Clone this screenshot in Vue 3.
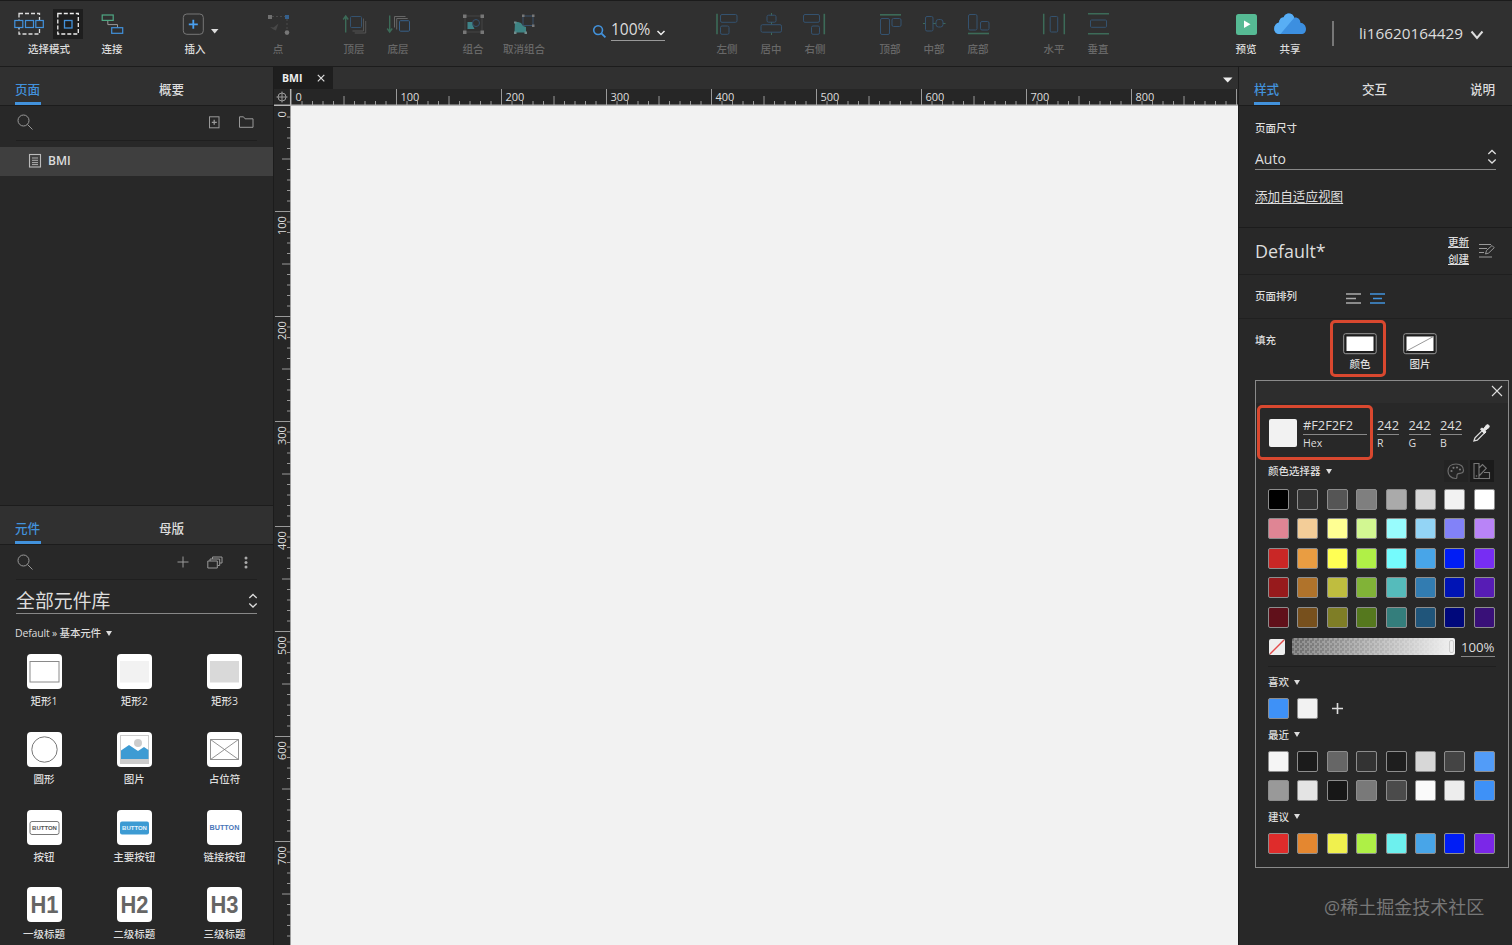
<script setup>
const G = '#3c6b58'
const B = '#34526f'
const Y = '#707070'
const icons = {
  connect: `<path d="M10.8 8.7V12.6H20.5V15.3" stroke="#999"/><rect x="5.2" y="3" width="11" height="5.4" stroke="#4fa884" stroke-width="1.200"/><rect x="14.7" y="15.7" width="11" height="5.6" stroke="#4292dc" stroke-width="1.200"/>`,
  insert: `<rect x="3.3" y="2" width="20" height="20.3" rx="3.5" stroke="#777"/><path d="M13.3 7.8v9M8.800 12.3h9" stroke="#4aa0f0" stroke-width="1.8"/>`,
  point: `<path d="M9 4.5h13M24 7v12" stroke="#4a4a4a" stroke-dasharray="2 2"/><path d="M5 3h4v4h-4z" fill="${Y}" stroke="none"/><path d="M22 3h4v4h-4z" fill="#35608c" stroke="none"/><circle cx="24" cy="20.6" r="2.3" fill="#777" stroke="none"/><path d="M7 15l3.500.5 5-4-2.500 7-2.500-1z" fill="#484848" stroke="none"/>`,
  front: `<path d="M6.7 20.5V4.5M4.200 7.500l2.500-3.500 2.500 3.500" stroke="${G}" stroke-width="1.4"/><path d="M24.500 6.500v12.500h-11M26.700 9v12h-11" stroke="#555"/><rect x="11.500" y="4.500" width="11" height="11" rx="1" stroke="${B}"/>`,
  back: `<path d="M6.700 3.500v16M4.200 16.500l2.500 3.500 2.500-3.500" stroke="${G}" stroke-width="1.4"/><path d="M11.500 15.500V4.500h11M13.700 17.500V6.500h11" stroke="#666"/><rect x="16.500" y="8.700" width="10" height="10.500" rx="1" stroke="#386089"/>`,
  group: `<rect x="7" y="4" width="17" height="16" stroke="#444"/><path d="M5 2.500h3.500v3.500h-3.500zM22.500 2.500h3.500v3.500h-3.500zM5 18.500h3.500v3.500h-3.500zM22.500 18.500h3.500v3.500h-3.500z" fill="#777" stroke="none"/><path d="M9.500 10h5v3l2 4h-7z" fill="#3e8489" stroke="none"/><circle cx="18" cy="11" r="3.500" stroke="${B}"/>`,
  ungroup: `<rect x="14" y="4" width="10" height="9.500" stroke="#38506a"/><path d="M13 2.500h2.500v2.500h-2.500zM23 2.500h2.500v2.500h-2.500zM23 12.500h2.500v2.500h-2.500z" fill="#777" stroke="none"/><path d="M6 10h3l3 1 2 3 3 1v5.500H5.500z" fill="#3e8484" stroke="none"/><path d="M5 9.500h2.500v2h-2.500zM5 19.500h2.500v2.500h-2.500zM15.500 19.500h2.500v2.500h-2.500z" fill="#6f8a8a" stroke="none"/>`,
  left: `<path d="M5 1.800v20.500" stroke="${G}" stroke-width="1.600"/><rect x="8.500" y="2.500" width="16.500" height="7.800" rx="1.500"/><rect x="8.500" y="14" width="8.500" height="8.300" rx="1.500"/>`,
  center: `<path d="M15.500 1v2.500M15.500 10v2.500M15.500 20.500v2.500" stroke="${G}"/><rect x="11" y="3.200" width="9" height="7" rx="1.500"/><rect x="5" y="12.700" width="20.500" height="7.500" rx="1.500"/>`,
  right: `<path d="M24.300 1.800v20.500" stroke="${G}" stroke-width="1.600"/><rect x="3.500" y="2.500" width="16" height="7.800" rx="1.500"/><rect x="11.500" y="14" width="8" height="8.300" rx="1.500"/>`,
  top: `<path d="M5 2.800h21" stroke="${G}" stroke-width="1.600"/><rect x="5.500" y="6.500" width="9" height="16" rx="1.500"/><rect x="17" y="6.500" width="9" height="8" rx="1.500"/>`,
  middle: `<path d="M4 11.500h2.500M14 11.500h3M24 11.500h2.500" stroke="${G}"/><rect x="6.500" y="4.500" width="7.500" height="14.500" rx="1.500"/><rect x="17" y="7.500" width="7" height="7.500" rx="2.500"/>`,
  bottom: `<path d="M5 21.500h21" stroke="${G}" stroke-width="1.600"/><rect x="5.500" y="2.500" width="8.500" height="15.500" rx="1.500"/><rect x="17.500" y="9.500" width="8.500" height="8.500" rx="1.500"/>`,
  horizontal: `<path d="M4.700 1.800v20.500M25.300 1.800v20.500" stroke="${G}" stroke-width="1.500"/><rect x="11.200" y="4.500" width="7.500" height="15.500" rx="1"/>`,
  vertical: `<path d="M5 1.700h21M5 21.800h21" stroke="${G}" stroke-width="1.500"/><rect x="7.500" y="8" width="16" height="7.300" rx="1"/>`,
  preview: `<rect x="5" y="2" width="21" height="21" rx="2.500" fill="#56ba94" stroke="none"/><path d="M13 8.500v7.500l6.500-3.750z" fill="#fff" stroke="none"/>`,
  share: `<path d="M3.800 22A5.500 5.500 0 0 1-.8 17C-.8 13.500 1.200 11.300 4 10.500C4.300 7.300 6.500 5.300 8.500 5.600C9.600 2.700 11.500 1.500 13.700 1.500C16.500 1.500 18.500 3 19.200 5.700C22.500 5 25.500 7.500 25.400 10.700C28.500 11 31 13.500 31 17C31 19.800 29.500 22 27.300 22Z" fill="#3c8fe0" stroke="none"/><path d="M3.800 22A5.500 5.500 0 0 1-.8 17C-.8 13.500 1.200 11.300 4 10.500C4.300 7.300 6.500 5.300 8.500 5.600C9.600 2.700 11.500 1.500 13.700 1.500C16.500 1.500 18.500 3 19.200 5.700L5.500 22Z" fill="#58aef5" stroke="none"/>`,
}
const tools = [
  { id: 'connect', label: '连接', cls: 'on' },
  { id: 'insert', label: '插入', cls: 'on g-insert' },
  { id: 'point', label: '点', cls: 'g-point' },
  { id: 'front', label: '顶层', cls: 'g-order' },
  { id: 'back', label: '底层' },
  { id: 'group', label: '组合', cls: 'g-group' },
  { id: 'ungroup', label: '取消组合', cls: 'g-ungroup' },
]
const aligns = [
  { id: 'left', label: '左侧' },
  { id: 'center', label: '居中' },
  { id: 'right', label: '右侧' },
  { id: 'top', label: '顶部', cls: 'g-align' },
  { id: 'middle', label: '中部' },
  { id: 'bottom', label: '底部' },
  { id: 'horizontal', label: '水平', cls: 'g-spread' },
  { id: 'vertical', label: '垂直' },
  { id: 'preview', label: '预览', cls: 'on g-preview' },
  { id: 'share', label: '共享', cls: 'on' },
]
const btn = (fill, stroke, color, size) =>
  `${fill || stroke ? `<rect x="3" y="11.500" width="29" height="13" rx="2" fill="${fill || 'none'}" stroke="${stroke || 'none'}"/>` : ''}<text x="17.500" y="20" text-anchor="middle" font-size="${size}" font-weight="700" fill="${color}">BUTTON</text>`
const head = (t) => `<text x="17.500" y="26" text-anchor="middle" font-size="23.500" font-weight="700" fill="#666" textLength="28" lengthAdjust="spacingAndGlyphs">${t}</text>`
const widgets = [
  { label: '矩形1', art: '<rect x="3" y="7.500" width="29" height="20.500" fill="#fff" stroke="#8a8a8a"/>' },
  { label: '矩形2', art: '<rect x="3" y="7" width="29" height="21.500" fill="#f2f2f2"/>' },
  { label: '矩形3', art: '<rect x="3" y="7" width="29" height="21.500" fill="#d9d9d9"/>' },
  { label: '圆形', art: '<circle cx="17.500" cy="17.500" r="12.700" fill="none" stroke="#777"/>' },
  { label: '图片', art: '<rect x="3.500" y="3.500" width="28" height="28" fill="#fff" stroke="#ccc"/><rect x="3" y="27" width="29" height="5" fill="#ccc"/><circle cx="21" cy="11" r="4" fill="#ccc"/><path d="M4 18.500L12 13l9 6 6-4 4.500 3v9H4z" fill="#3d9bd3"/>' },
  { label: '占位符', art: '<path d="M3.500 7.500h28v20h-28zM3.500 7.500l28 20M31.500 7.500l-28 20" fill="none" stroke="#777" stroke-width=".8"/>' },
  { label: '按钮', art: btn('#fff', '#777', '#555', 6) },
  { label: '主要按钮', art: btn('#3d9bd3', '', '#e4f3fc', 6) },
  { label: '链接按钮', art: btn('', '', '#4a76b8', 7.2) },
  { label: '一级标题', art: head('H1') },
  { label: '二级标题', art: head('H2') },
  { label: '三级标题', art: head('H3') },
]
const palette = [
  '#000000', '#333333', '#555555', '#7f7f7f', '#aaaaaa', '#d7d7d7', '#f2f2f2', '#ffffff',
  '#df8594', '#f3cd98', '#ffff93', '#d2f792', '#98fcfd', '#93d4f5', '#8282f8', '#b984f7',
  '#c92726', '#e99d42', '#ffff54', '#b0f047', '#75fbfd', '#48a5e8', '#001df5', '#772df3',
  '#971a1c', '#b0732b', '#bfbd3f', '#81b337', '#55bbbb', '#327cb1', '#0014b5', '#571cb5',
  '#60101a', '#77501d', '#7f7e26', '#55781e', '#347e7c', '#20557a', '#00087b', '#391078',
]
const favourites = ['#3e91f7', '#f2f2f2']
const recent = [
  '#f5f5f5', '#1b1b1b', '#666666', '#333333', '#1e1e1e', '#d7d7d7', '#444444', '#529cf8',
  '#999999', '#e4e4e4', '#171717', '#797979', '#4b4b4b', '#fafafa', '#ededed', '#3e91f7',
]
const suggested = ['#df2c2b', '#e48730', '#f0f04e', '#aef046', '#6df0ee', '#48a5e8', '#001df5', '#7b27e8']

const step = 10.5
const hTicks = Array.from({ length: 91 }, (_, i) => ({ p: 17.5 + i * step, i })).filter((t) => t.i > 0)
const vTicks = Array.from({ length: 80 }, (_, i) => ({ p: 0.5 + i * step, i })).filter((t) => t.i > 0)
const hLabels = Array.from({ length: 9 }, (_, i) => i)
const vLabels = Array.from({ length: 8 }, (_, i) => i)
const depth = (i) => (i % 10 === 0 ? 16 : i % 5 === 0 ? 9 : 4)
</script>

<template>
  <div class="app">
    <header class="toolbar">
      <div class="modes">
        <div class="mode-icons">
          <svg class="mode" viewBox="0 0 30 30"><rect x="5" y="4.500" width="20.500" height="20.500" fill="none" stroke="#ddd" stroke-width="1.300" stroke-dasharray="4 2" /><g fill="#303030" stroke="#4292dc" stroke-width="1.200"><rect x=".8" y="11.500" width="8" height="7" /><rect x="11.500" y="11.500" width="8" height="7" /><rect x="21.800" y="11.500" width="7.500" height="7" /></g></svg>
          <svg class="mode active" viewBox="0 0 30 30"><rect x="4.800" y="4.500" width="20.500" height="20.500" fill="none" stroke="#eee" stroke-width="1.300" stroke-dasharray="4 2" /><rect x="11.500" y="11.500" width="7.500" height="7.500" fill="none" stroke="#4292dc" stroke-width="1.300" /></svg>
        </div>
        <span class="tool-label">选择模式</span>
      </div>
      <div v-for="t in tools" :key="t.id" class="tool" :class="t.cls">
        <svg class="tool-icon" viewBox="0 0 30 24" v-html="icons[t.id]" />
        <span class="tool-label">{{ t.label }}</span>
        <svg v-if="t.id === 'insert'" class="caret" viewBox="0 0 8 5"><path d="M0 0h7.500L3.700 4.500z" fill="#ddd" /></svg>
      </div>
      <div class="zoom">
        <svg class="zoom-icon" viewBox="0 0 16 16"><circle cx="6.500" cy="6.500" r="4.700" fill="none" stroke="#4292dc" stroke-width="1.700" /><path d="M10 10l4.300 4.300" stroke="#4292dc" stroke-width="2" /></svg>
        <div class="zoom-value"><span>100%</span><svg class="zoom-arrow" viewBox="0 0 10 6"><path d="M1.500 1l3.500 3.500L8.500 1" fill="none" stroke="#eee" stroke-width="1.500" /></svg></div>
      </div>
      <div v-for="t in aligns" :key="t.id" class="tool" :class="t.cls">
        <svg class="tool-icon" viewBox="0 0 30 24" v-html="icons[t.id]" />
        <span class="tool-label">{{ t.label }}</span>
      </div>
      <div class="rule"></div>
      <div class="user"><span>li16620164429</span><svg viewBox="0 0 14 10"><path d="M1.500 1.500L7 8l5.500-6.500" fill="none" stroke="#ddd" stroke-width="2" /></svg></div>
    </header>

    <div class="body">
      <aside class="left">
        <section class="pages">
          <nav class="tabs"><span class="tab current">页面</span><span class="tab">概要</span></nav>
          <div class="search">
            <svg class="lens" viewBox="0 0 16 16"><circle cx="6.500" cy="6.500" r="5.500" /><path d="M10.500 10.500l5 5" /></svg>
            <svg class="add-page" viewBox="0 0 11 13"><rect x=".5" y=".8" width="9.500" height="11" /><path d="M5.200 3.800v5M2.800 6.300h5" stroke-width="1.300" /></svg>
            <svg class="folder" viewBox="0 0 15 12"><path d="M.5.800h4l1.500 2h8v8.500H.5z" /></svg>
          </div>
          <div class="page-row">
            <svg viewBox="0 0 12 14"><rect x=".5" y=".5" width="11" height="12.500" fill="none" stroke="#bbb" stroke-width="1.100" /><path d="M3 4h6M3 6.300h6M3 8.600h6M3 10.600h6" stroke="#bbb" stroke-width=".9" /></svg>
            <span>BMI</span>
          </div>
        </section>
        <section class="library">
          <nav class="tabs"><span class="tab current">元件</span><span class="tab">母版</span></nav>
          <div class="search">
            <svg class="lens" viewBox="0 0 16 16"><circle cx="6.500" cy="6.500" r="5.500" /><path d="M10.500 10.500l5 5" /></svg>
            <svg class="plus" viewBox="0 0 12 12"><path d="M6 .5v11M.5 6h11" /></svg>
            <svg class="stack" viewBox="0 0 16 13"><path d="M.8 5h9.500v7H.8zM3 5V3h9.700v6.500h-2M5.500 3V1h9.500v6h-2" /></svg>
            <svg class="dots" viewBox="0 0 4 13"><g fill="#aaa" stroke="none"><circle cx="2" cy="2" r="1.500" /><circle cx="2" cy="6.500" r="1.500" /><circle cx="2" cy="11" r="1.500" /></g></svg>
          </div>
          <div class="lib-select"><span>全部元件库</span><svg class="updown" viewBox="0 0 10 16"><path d="M1.300 5L5 1.500 8.700 5M1.300 10.500L5 14l3.700-3.500" /></svg></div>
          <div class="category"><span>Default » 基本元件</span><i class="tri"></i></div>
          <div class="widgets">
            <div v-for="w in widgets" :key="w.label" class="widget">
              <svg class="tile" viewBox="0 0 35 35" v-html="w.art" />
              <span>{{ w.label }}</span>
            </div>
          </div>
        </section>
      </aside>

      <main class="stage">
        <div class="doc-tabs">
          <div class="doc-tab"><span>BMI</span><svg viewBox="0 0 8 8"><path d="M.8.800l6.500 6.500M7.300.800L.8 7.300" stroke="#ddd" stroke-width="1.200" /></svg></div>
          <svg class="doc-menu" viewBox="0 0 10 6"><path d="M0 .5h9.500L4.700 5.500z" fill="#eee" /></svg>
        </div>
        <svg class="hruler" viewBox="0 0 964 17">
          <g fill="none" stroke="#999"><circle cx="8" cy="8" r="4" /><path d="M8 2.500v11M2.500 8h11" /></g>
          <path v-for="t in hTicks" :key="t.i" :d="`M${t.p} 16v-${depth(t.i)}`" stroke="#999" />
          <text v-for="n in hLabels" :key="n" :x="21.500 + n * 105" y="12">{{ n * 100 }}</text>
          <path d="M0 16.300h964" stroke="#b5b5b5" stroke-width="1.400" />
          <path d="M16.700 0v17" stroke="#b5b5b5" stroke-width="1.500" />
        </svg>
        <div class="canvas-row">
          <svg class="vruler" viewBox="0 0 17 839">
            <path v-for="t in vTicks" :key="t.i" :d="`M17 ${t.p}h-${depth(t.i)}`" stroke="#999" />
            <text v-for="n in vLabels" :key="n" :transform="`translate(12.200 ${5.2 + n * 105}) rotate(-90)`" text-anchor="end">{{ n * 100 }}</text>
            <path d="M16.600 0v839" stroke="#aaa" />
          </svg>
          <div class="canvas"></div>
        </div>
      </main>

      <aside class="right">
        <nav class="tabs"><span class="tab current">样式</span><span class="tab">交互</span><span class="tab">说明</span></nav>
        <section class="size">
          <label>页面尺寸</label>
          <div class="auto"><span>Auto</span><svg class="updown" viewBox="0 0 10 16"><path d="M1.300 5L5 1.500 8.700 5M1.300 10.500L5 14l3.700-3.500" /></svg></div>
          <u class="adaptive">添加自适应视图</u>
        </section>
        <section class="style-name">
          <span class="name">Default*</span>
          <div class="links"><u>更新</u><u>创建</u></div>
          <svg viewBox="0 0 17 16"><path d="M1 1.500h12M1 5.500h8M1 9.500h5M1 14h13" /><path d="M7.500 11l1-3.500 5.500-5 2.200 2.200-5.500 5.300z" fill="#282828" /></svg>
        </section>
        <section class="arrange">
          <label>页面排列</label>
          <svg viewBox="0 0 15 11"><path d="M0 1h15M0 5.500h10M0 10h15" stroke="#aaa" stroke-width="1.700" /></svg>
          <svg viewBox="0 0 15 11"><path d="M0 1h15M3 5.500h9M0 10h15" stroke="#4292dc" stroke-width="1.700" /></svg>
        </section>
        <section class="fill">
          <label>填充</label>
          <div class="fill-item"><svg viewBox="0 0 34 22"><rect x=".7" y=".7" width="32.500" height="20" rx="2" fill="#1e1e1e" stroke="#999" /><rect x="3.500" y="3.500" width="27" height="14.500" fill="#fff" /></svg><span>颜色</span></div>
          <div class="fill-item"><svg viewBox="0 0 34 22"><rect x=".7" y=".7" width="32.500" height="20" rx="2" fill="#1e1e1e" stroke="#999" /><rect x="3.500" y="3.500" width="27" height="14.500" fill="#fff" /><path d="M3.500 18l27-14.500" stroke="#999" /></svg><span>图片</span></div>
        </section>

        <div class="picker">
          <div class="picker-head"><svg viewBox="0 0 12 12"><path d="M1 1l10 10M11 1L1 11" stroke="#ddd" stroke-width="1.100" /></svg></div>
          <div class="values">
            <div class="preview"></div>
            <div class="field hex"><b>#F2F2F2</b><small>Hex</small></div>
            <div v-for="c in ['R', 'G', 'B']" :key="c" class="field"><b>242</b><small>{{ c }}</small></div>
            <svg viewBox="0 0 18 20"><path d="M2 17.800l1-3 7-7 2.300 2.300-7 7z" fill="none" stroke="#ddd" stroke-width="1.300" /><path d="M8.500 6l1.500-1 1.500 1 3-4c1.500-1 3.500.5 2.500 2.500L13 7.500l1 1.500-1.500 1.500z" fill="#e8e8e8" stroke="#e8e8e8" /></svg>
          </div>
          <div class="mode-row">
            <span>颜色选择器</span><i class="tri"></i>
            <svg viewBox="0 0 24 22"><path d="M12 4c-5 0-8 3-8 7s3 7.500 7.500 7.500c2.500 0 .5-3 2-4.500s6 .5 6-3.500S17 4 12 4z" fill="none" stroke="#6c6c6c" stroke-width="1.200" /><g fill="#777"><circle cx="7.500" cy="11" r="1.100" /><circle cx="9.500" cy="7.800" r="1.100" /><circle cx="13" cy="7.500" r="1.100" /><circle cx="16" cy="9.500" r="1.100" /></g></svg>
            <svg class="picked" viewBox="0 0 24 22"><path d="M4 3.500h5v15H4zM9 8l3.500-3.500 3.800 3.800L9 16M14 12.500h5.500v6H6" fill="none" stroke="#777" stroke-width="1.100" /><circle cx="6.500" cy="16" r=".8" fill="#777" /></svg>
          </div>
          <div class="swatches main"><i v-for="(c, i) in palette" :key="i" :style="{ background: c }"></i></div>
          <div class="alpha">
            <svg viewBox="0 0 16 16"><rect width="16" height="16" rx="2" fill="#eee" /><path d="M1 15L15 1" stroke="#e34a4a" stroke-width="1.400" /></svg>
            <div class="track"><i></i></div>
            <span>100%</span>
          </div>
          <div class="group fav"><span>喜欢</span><i class="tri"></i></div>
          <div class="swatches"><i v-for="(c, i) in favourites" :key="i" :style="{ background: c }"></i><svg viewBox="0 0 21 21"><path d="M10.500 5v11M5 10.500h11" stroke="#ddd" stroke-width="1.600" /></svg></div>
          <div class="group"><span>最近</span><i class="tri"></i></div>
          <div class="swatches"><i v-for="(c, i) in recent" :key="i" :style="{ background: c }"></i></div>
          <div class="group"><span>建议</span><i class="tri"></i></div>
          <div class="swatches"><i v-for="(c, i) in suggested" :key="i" :style="{ background: c }"></i></div>
        </div>
        <div class="mark mark-color"></div>
        <div class="mark mark-hex"></div>
        <div class="watermark">@稀土掘金技术社区</div>
      </aside>
    </div>
  </div>
</template>

<style>
body { background: #282828; overflow: hidden; }
</style>

<style scoped>
* { box-sizing: border-box; }
.app { width: 1512px; height: 945px; display: flex; flex-direction: column; overflow: hidden; background: #282828; color: #ddd; font-family: "Open Sans", "Noto Sans CJK SC", sans-serif; font-size: 10.5px; line-height: 14px; white-space: nowrap; }
svg { display: block; flex: none; overflow: visible; }
label, .tool-label, .category, .widget span, .fill-item span, .group, .mode-row, .links { font-weight: 500; }

.toolbar { height: 67px; flex: none; display: flex; background: #303030; border-top: 1px solid #1b1b1b; border-bottom: 1px solid #1c1c1c; padding-left: 14px; }
.modes { width: 71px; padding-top: 8px; display: flex; flex-direction: column; }
.mode-icons { display: flex; gap: 9px; }
.mode { width: 30px; height: 30px; }
.mode.active { background: #1e1e1e; }
.modes .tool-label { margin: 3px 0 0 14px; }
.tool { width: 44px; padding-top: 11px; display: flex; flex-direction: column; align-items: center; color: #686868; position: relative; }
.modes + .tool { margin-left: 5px; }
.tool.on { color: #ddd; }
.tool-icon { width: 30px; height: 24px; fill: none; stroke: #34526f; }
.tool-label { margin-top: 6px; }
.g-insert { margin-left: 39px; }
.g-point { margin-left: 39px; }
.g-order { margin-left: 32px; }
.g-group { margin-left: 31px; }
.g-ungroup { margin-left: 7px; }
.g-align { margin-left: 31px; }
.g-spread { margin-left: 32px; }
.g-preview { margin-left: 104px; }
.caret { position: absolute; width: 8px; height: 5px; left: 38px; top: 28px; }
.zoom { display: flex; width: 114px; margin-left: 46px; margin-right: -1px; padding-top: 19px; }
.zoom-icon { width: 15px; height: 15px; margin: 4px 4px 0 0; }
.zoom-value { width: 54px; height: 21px; border-bottom: 1px solid #999; display: flex; justify-content: space-between; font-size: 15.500px; line-height: 19px; }
.zoom-arrow { width: 10px; height: 6px; margin: 10px -1px 0 0; }
.rule { width: 2px; height: 25px; background: #777; margin: 20px 0 0 20px; }
.user { display: flex; margin-left: 25px; padding-top: 21px; font-size: 15.300px; line-height: 22px; }
.user svg { width: 14px; height: 10px; margin: 8px 0 0 7px; }

.body { flex: 1; display: flex; min-height: 0; }
.tabs { height: 39px; background: #303030; border-bottom: 1px solid #1c1c1c; display: flex; font-size: 12.6px; font-weight: 500; }
.tab { line-height: 46px; height: 38px; width: 26px; }
.tab.current { color: #4292dc; border-bottom: 3px solid #4292dc; }

.left { width: 274px; border-right: 1px solid #1c1c1c; display: flex; flex-direction: column; }
.left .tabs { padding-left: 15px; gap: 118px; }
.pages { height: 438px; flex: none; }
.search { height: 35px; margin: 0 16px; border-bottom: 1px solid #1f1f1f; display: flex; align-items: center; }
.search svg { fill: none; stroke: #999; }
.pages .search { padding-bottom: 2px; }
.lens { width: 16px; height: 16px; margin: 0 auto 1px 1px; }
.add-page { width: 11px; height: 13px; margin-right: 19px; }
.folder { width: 15px; height: 12px; margin-right: 3px; }
.plus { width: 12px; height: 12px; margin-right: 18px; }
.stack { width: 16px; height: 13px; margin-right: 21px; }
.dots { width: 4px; height: 13px; margin-right: 9px; }
.page-row { height: 29px; margin-top: 6px; background: #3f3f3f; display: flex; align-items: center; padding: 0 0 2px 29px; font-size: 12px; font-weight: 600; }
.page-row svg { width: 12px; height: 14px; margin: 1px 7px 0 0; }
.library { flex: 1; min-height: 0; border-top: 1px solid #1c1c1c; }
.lib-select { height: 34px; margin: 0 16px; border-bottom: 1px solid #888; display: flex; align-items: center; justify-content: space-between; font-size: 18.9px; padding-top: 8px; line-height: 24px; }
.updown { width: 10px; height: 16px; fill: none; stroke: #ddd; stroke-width: 1.300; }
.lib-select .updown { margin-right: -1px; }
.category { display: flex; align-items: center; margin: 12px 0 0 15px; height: 14px; letter-spacing: -.18px; }
.tri { display: block; border: 3px solid transparent; border-top: 5px solid #ddd; border-bottom: 0; margin-left: 5px; }
.widgets { display: grid; grid-template-columns: repeat(3, 90.200px); grid-auto-rows: 77.800px; margin-top: 14px; margin-left: -1px; }
.widget { display: flex; flex-direction: column; align-items: center; }
.tile { width: 35px; height: 35px; border-radius: 4px; background: #fff; font-family: "Liberation Sans", sans-serif; }
.widget span { margin-top: 5px; }

.stage { width: 964px; display: flex; flex-direction: column; background: #262626; }
.doc-tabs { height: 22px; background: #303030; display: flex; justify-content: space-between; align-items: center; }
.doc-tab { width: 59px; height: 22px; background: #1e1e1e; display: flex; align-items: center; padding-left: 8px; gap: 15px; font-size: 10.5px; font-weight: 700; color: #eee; }
.doc-tab svg { width: 8px; height: 8px; }
.doc-menu { width: 10px; height: 6px; margin: 4px 5px 0 0; }
.hruler { width: 964px; height: 17px; overflow: hidden; }
.hruler text, .vruler text { font-size: 11px; fill: #ddd; font-weight: 500; }
.canvas-row { display: flex; flex: 1; }
.vruler { width: 17px; height: 839px; overflow: hidden; }
.canvas { flex: 1; background: #f2f2f2; }

.right { width: 274px; border-left: 1px solid #1c1c1c; position: relative; }
.right .tabs { padding-left: 15px; gap: 82px; }
.size { height: 122px; padding: 15px 16px 0; border-bottom: 1px solid #1c1c1c; display: flex; flex-direction: column; }
.auto { height: 23px; margin-top: 12px; border-bottom: 1px solid #888; display: flex; justify-content: space-between; font-size: 14px; line-height: 23px; }
.auto .updown { margin: 2px -1px 0 0; }
.adaptive { margin-top: 20px; font-size: 12.6px; text-underline-offset: 2px; }
.style-name { height: 47px; border-bottom: 1px solid #1f1f1f; display: flex; align-items: center; padding: 0 0 1px 16px; }
.name { font-size: 17.900px; width: 193px; }
.links { display: flex; flex-direction: column; gap: 3px; width: 30px; text-underline-offset: 1px; }
.style-name svg { width: 17px; height: 16px; fill: none; stroke: #999; }
.arrange { height: 44px; border-bottom: 1px solid #202020; display: flex; align-items: center; padding-left: 16px; }
.arrange label { width: 91px; margin-top: -2px; }
.arrange svg { width: 15px; height: 11px; margin: 3px 9px 0 0; }
.fill { padding: 14px 0 0 16px; display: flex; }
.fill label { width: 88px; }
.fill-item { width: 34px; margin-right: 26px; display: flex; flex-direction: column; align-items: center; }
.fill-item svg { width: 34px; height: 22px; }
.fill-item span { margin-top: 2px; }

.picker { position: absolute; left: 16px; top: 313px; width: 254px; height: 488px; border: 1px solid #8a8a8a; background: #282828; padding: 0 12px; }
.picker-head { height: 22px; margin: 0 -12px; background: #2d2d2d; display: flex; justify-content: flex-end; padding: 4px 5px 0 0; }
.picker-head svg { width: 12px; height: 12px; }
.values { display: flex; margin-top: 14px; height: 34px; padding-left: 1px; }
.preview { width: 28px; height: 28px; margin: 2px 6px 0 0; border-radius: 2px; background: #f2f2f2; }
.field { width: 22px; margin-right: 9.500px; display: flex; flex-direction: column; }
.field.hex { width: 64px; margin-right: 10px; }
.field b { height: 18px; line-height: 16px; font-size: 12.8px; font-weight: 400; border-bottom: 1px solid #888; }
.field small { font-size: 10.500px; line-height: 14px; margin-top: 1px; }
.values svg { width: 18px; height: 20px; margin: 6px 0 0 0; }
.mode-row { height: 22px; display: flex; align-items: center; margin-top: 9px; }
.mode-row .tri { margin-right: auto; }
.mode-row svg { width: 24px; height: 22px; margin-left: 2px; background: #242424; }
.mode-row svg.picked { background: #1b1b1b; margin-right: 2px; }
.swatches { display: grid; grid-template-columns: repeat(8, 21px); column-gap: 8.400px; row-gap: 8.400px; }
.swatches i { height: 21px; border: 1px solid #8d8d8d; border-radius: 2px; }
.swatches.main { margin-top: 7px; }
.alpha { display: flex; align-items: center; height: 39px; border-bottom: 1px solid #1f1f1f; padding-left: 1px; }
.alpha svg { width: 16px; height: 16px; }
.track { width: 163px; height: 17px; border-radius: 2px; margin: 0 6px 0 7px; display: flex; justify-content: flex-end; align-items: center; padding-right: 1px; background: linear-gradient(90deg, #f2f2f200, #f2f2f2), repeating-conic-gradient(#8b8b8b 0 25%, #6d6d6d 0 50%) 0 0 / 5px 5px; }
.track i { width: 5px; height: 13px; border: 1px solid #ccc; border-radius: 2px; }
.alpha span { width: 34px; height: 19px; margin-top: 2px; border-bottom: 1px solid #888; font-size: 13.200px; line-height: 18px; }
.group { display: flex; align-items: center; height: 32px; }
.group.fav { height: 31px; }

.mark { position: absolute; border: 3px solid #d9482f; border-radius: 5px; }
.mark-color { left: 91px; top: 253px; width: 56px; height: 57px; }
.mark-hex { left: 18px; top: 338px; width: 116px; height: 55px; }
.watermark { position: absolute; left: 85px; top: 828px; font-size: 18px; line-height: 24px; color: #777; }
</style>
